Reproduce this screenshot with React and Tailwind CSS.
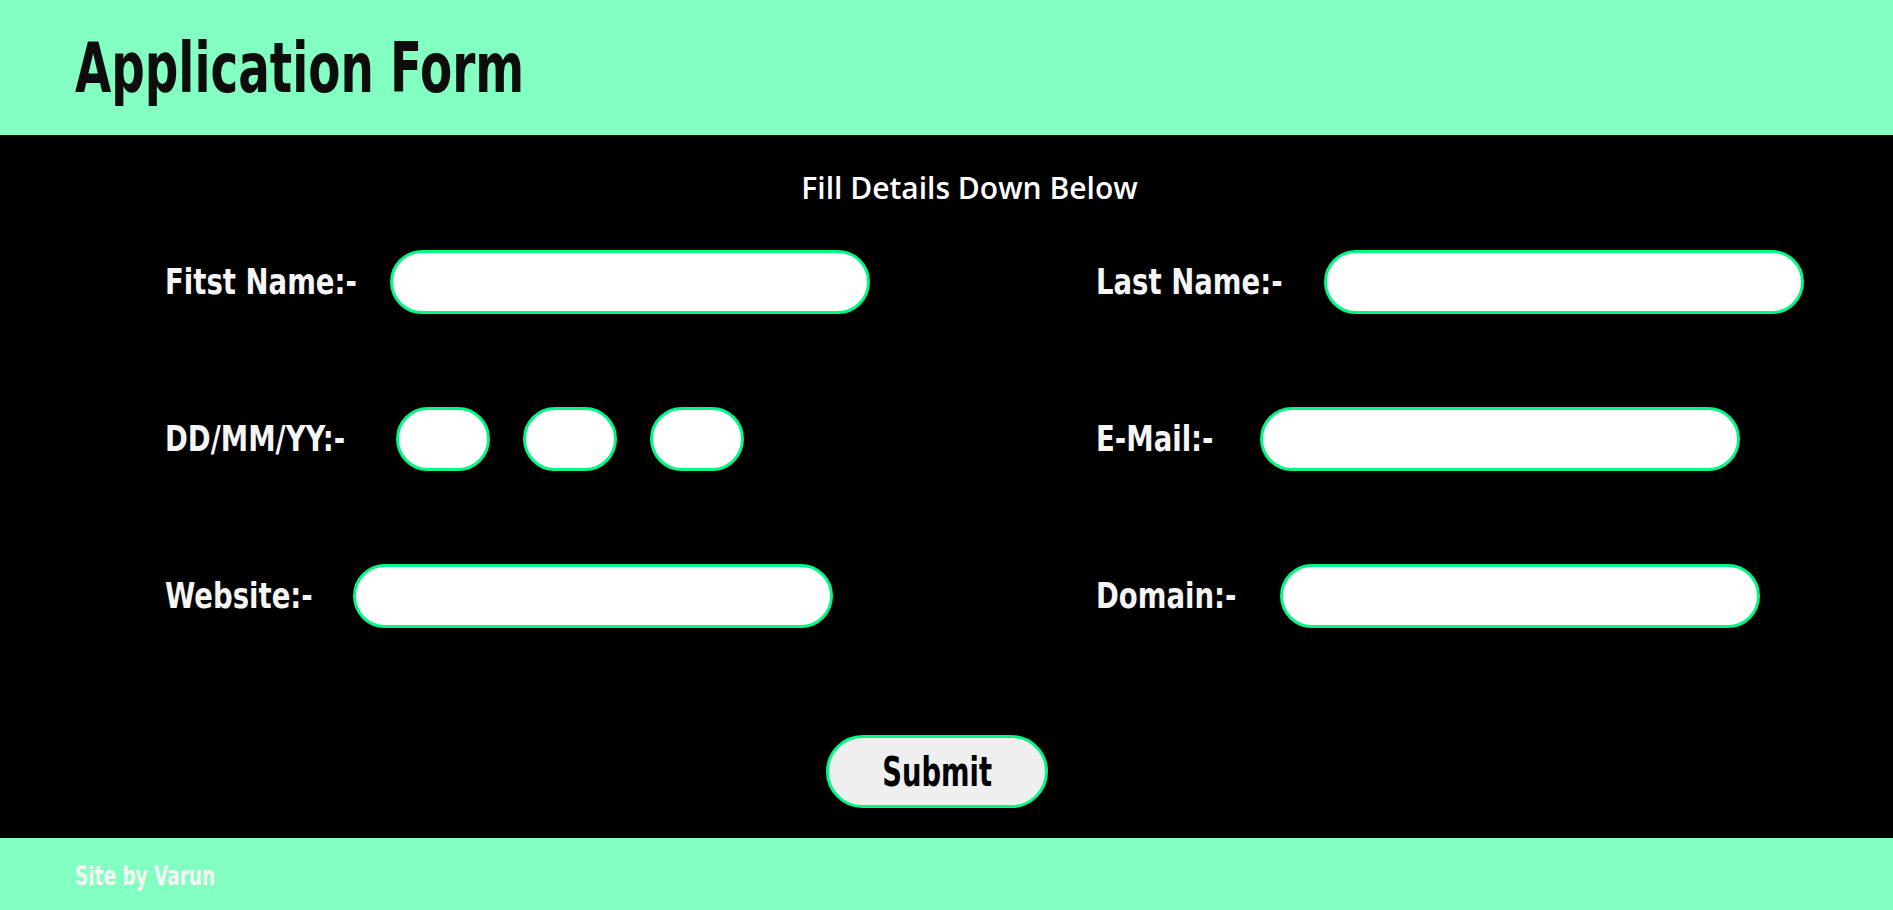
const display = "font-['DejaVu_Sans_Condensed','DejaVu_Sans',sans-serif] font-bold";

const inputCls = 'h-[64px] rounded-full border-[3px] border-[#00f985] bg-white px-5 outline-none';

const Label = ({ children, width }) => (
  <label className={`${width} shrink-0 whitespace-nowrap`}>
    <span className={`${display} inline-block origin-left scale-x-[0.85] text-[36px] leading-none text-[#f5f5f5]`}>
      {children}
    </span>
  </label>
);

const Field = ({ label, labelWidth }) => (
  <div className="flex items-center">
    <Label width={labelWidth}>{label}</Label>
    <input type="text" className={`w-[480px] ${inputCls}`} />
  </div>
);

const App = () => {
  return (
    <div className="min-h-[910px] flex flex-col bg-black">
      <header className="h-[135px] bg-[#82ffc1] flex items-center px-[75px]">
        <h1 className={`${display} inline-block origin-left scale-x-[0.744] text-[70px] leading-none text-[#0d0d0d] whitespace-nowrap`}>
          Application Form
        </h1>
      </header>

      <main className="flex flex-col h-[703px] pt-[35px]">
        <p className="text-center pl-[46px] font-['Open_Sans',sans-serif] font-semibold text-[30px] leading-[36px] text-white">
          Fill Details Down Below
        </p>

        <div className="grid grid-cols-[931px_1fr] gap-y-[93px] pl-[165px] mt-[44px]">
          <Field label="Fitst Name:-" labelWidth="w-[225px]" />
          <Field label="Last Name:-" labelWidth="w-[228px]" />

          <div className="flex items-center">
            <Label width="w-[231px]">DD/MM/YY:-</Label>
            <div className="flex gap-[33px]">
              <input type="text" className={`w-[94px] ${inputCls}`} />
              <input type="text" className={`w-[94px] ${inputCls}`} />
              <input type="text" className={`w-[94px] ${inputCls}`} />
            </div>
          </div>
          <Field label="E-Mail:-" labelWidth="w-[164px]" />

          <Field label="Website:-" labelWidth="w-[188px]" />
          <Field label="Domain:-" labelWidth="w-[184px]" />
        </div>

        <div className="flex justify-center pr-[19px] mt-[107px]">
          <button
            type="button"
            className="w-[222px] h-[73px] rounded-full border-[3px] border-[#00f985] bg-[#efefef] flex items-center justify-center"
          >
            <span className={`${display} inline-block scale-x-[0.76] text-[40px] leading-none text-black`}>Submit</span>
          </button>
        </div>
      </main>

      <footer className="h-[72px] bg-[#82ffc1] flex items-center px-[75px] pt-[2px]">
        <span className={`${display} inline-block origin-left scale-x-[0.76] text-[27px] leading-none text-[#f5f5f5] whitespace-nowrap`}>
          Site by Varun
        </span>
      </footer>
    </div>
  );
};

export default App;
